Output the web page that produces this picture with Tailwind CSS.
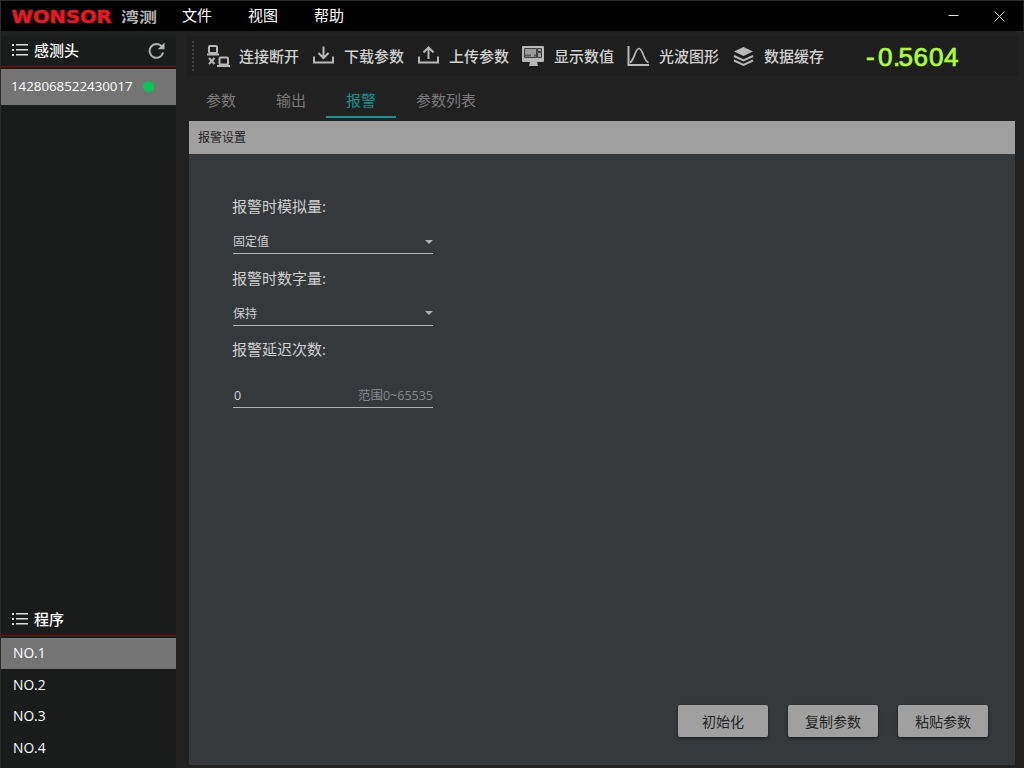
<!DOCTYPE html>
<html lang="zh-CN">
<head>
    <meta charset="UTF-8">
    <title>WONSOR 湾测</title>
    <script src="https://cdn.jsdelivr.net/npm/@tailwindcss/browser@4"></script>
</head>
<body class="w-[1024px] h-[768px] overflow-hidden bg-[#212121] font-['Open_Sans','Noto_Sans_CJK_SC',sans-serif] text-white">
    <div class="flex h-full flex-col border-t border-l border-[#2b2b2b]">

        <!-- Title bar -->
        <header class="flex h-[30px] w-[1022px] shrink-0 items-center bg-black">
            <svg class="ml-[10px] shrink-0" width="148" height="30" viewBox="0 0 148 30">
                <text x="0.5" y="21.5" font-family="DejaVu Sans" font-weight="bold" font-size="17" textLength="100" lengthAdjust="spacingAndGlyphs" fill="#e5191f" stroke="#e5191f" stroke-width="0.5">WONSOR</text>
                <text x="110" y="20.5" font-family="Noto Sans CJK SC" font-weight="bold" font-size="14" textLength="36" lengthAdjust="spacingAndGlyphs" fill="#b4b4b4">湾测</text>
            </svg>
            <nav class="ml-[23px] flex gap-9 text-[15px] leading-[28px]">
                <a class="pb-0.5">文件</a>
                <a class="pb-0.5">视图</a>
                <a class="pb-0.5">帮助</a>
            </nav>
            <div class="ml-auto mr-[18px] flex items-center gap-[35px]">
                <svg width="11" height="11" viewBox="0 0 11 11" stroke="#e0e0e0"><path d="M0.5 4.5h10"/></svg>
                <svg width="11" height="11" viewBox="0 0 11 11" stroke="#e0e0e0"><path d="M0.5 0.5l10 10M10.5 0.5l-10 10"/></svg>
            </div>
        </header>

        <div class="flex min-h-0 flex-1">
            <!-- Sidebar -->
            <aside class="mt-[5px] flex w-[175px] shrink-0 flex-col bg-[#1a1c1b]">
                <div class="flex h-[31px] shrink-0 items-center border-b border-[#900606] pb-0.5 pl-[11px] pr-[11px]">
                    <svg width="16" height="12" viewBox="0 0 16 12" fill="#dedede"><path d="M0 0h2v2H0zM4 0h12v1.6H4zM0 5h2v2H0zM4 5h12v1.6H4zM0 10h2v2H0zM4 10h12v1.6H4z"/></svg>
                    <span class="ml-[6px] text-[15px] leading-[28px] font-medium">感测头</span>
                    <svg class="ml-auto" width="17" height="17" viewBox="0 0 17 17" fill="none"><path d="M13.8 4.4A6.9 6.9 0 1 0 15.2 10.6" stroke="#b5b5b5" stroke-width="2"/><path d="M16.5 0.6v6.7H9.8z" fill="#b5b5b5"/></svg>
                </div>
                <div class="mt-[2px] flex h-9 shrink-0 items-center bg-[#747474] pb-0.5 pl-[10px]">
                    <span class="text-[13.3px] leading-[34px]">1428068522430017</span>
                    <span class="ml-[10px] size-[11px] rounded-full bg-[#00c853]"></span>
                </div>
                <div class="mt-auto flex h-[31px] shrink-0 items-center border-b border-[#900606] pb-0.5 pl-[11px]">
                    <svg width="16" height="12" viewBox="0 0 16 12" fill="#dedede"><path d="M0 0h2v2H0zM4 0h12v1.6H4zM0 5h2v2H0zM4 5h12v1.6H4zM0 10h2v2H0zM4 10h12v1.6H4z"/></svg>
                    <span class="ml-[6px] text-[15px] leading-[28px] font-medium">程序</span>
                </div>
                <ul class="mt-[2px] h-[130px] shrink-0 text-[13.8px]">
                    <li class="h-[31px] bg-[#747474] pl-3 leading-[29px]">NO.1</li>
                    <li class="h-8 pl-3 leading-8">NO.2</li>
                    <li class="h-[31px] pl-3 leading-[29px]">NO.3</li>
                    <li class="h-8 pl-3 leading-8">NO.4</li>
                </ul>
            </aside>

            <main class="ml-[10px] mt-[5px] flex w-[832px] flex-col">
                <!-- Toolbar -->
                <div class="flex h-10 shrink-0 items-center bg-[#1e1e1e] text-[15px] font-medium text-[#d2d2d2]">
                    <svg class="ml-[6px] mr-[12px]" width="2" height="30" viewBox="0 0 2 30"><path d="M1 0v30" stroke="#3e3e3e" stroke-width="2" stroke-dasharray="2 2"/></svg>
                    <div class="flex gap-3">
                        <div class="flex h-10 items-center gap-[9px]">
                            <svg width="24" height="24" viewBox="0 0 24 24" fill="none" stroke="#b8b8b8" stroke-width="2">
                                <rect x="3" y="2" width="8" height="7" rx="1"/>
                                <path d="M1 10.5h12M3 14l5.500 6M8.500 14L3 20M11 22h13"/>
                                <rect x="13.500" y="13.500" width="8.500" height="7" rx="1"/>
                            </svg>
                            <span>连接断开</span>
                        </div>
                        <div class="flex h-10 items-center gap-[9px]">
                            <svg width="24" height="24" viewBox="0 0 24 24" fill="none" stroke="#b8b8b8" stroke-width="2">
                                <path d="M3 12.500V18.500h19v-6M12.500 2.500v11.500M7.500 9l5 5 5-5"/>
                            </svg>
                            <span>下载参数</span>
                        </div>
                        <div class="flex h-10 items-center gap-[9px]">
                            <svg width="24" height="24" viewBox="0 0 24 24" fill="none" stroke="#b8b8b8" stroke-width="2">
                                <path d="M3 12.500v6h19v-6M12.500 15V4M7.500 8.500l5-5 5 5"/>
                            </svg>
                            <span>上传参数</span>
                        </div>
                        <div class="flex h-10 items-center gap-[9px]">
                            <svg width="24" height="24" viewBox="0 0 24 24">
                                <path d="M2 2h20a1 1 0 0 1 1 1v14a1 1 0 0 1-1 1h-6l1 4H8l1-4H2a1 1 0 0 1-1-1V3a1 1 0 0 1 1-1z" fill="#b8b8b8"/>
                                <path d="M3.500 4.500h12v9h-12zM16.500 4.500h4v3h-4zM16.500 8.500h4v5h-4z" fill="#9a9a9a" stroke="#3c3c3c"/>
                                <path d="M4 10.500h6v2H4zM13 10.500h2v2h-2z" fill="#5a5a5a"/>
                            </svg>
                            <span>显示数值</span>
                        </div>
                        <div class="flex h-10 items-center gap-[9px]">
                            <svg width="24" height="24" viewBox="0 0 24 24" fill="none" stroke="#b8b8b8" stroke-width="2">
                                <path d="M2.500 2v19H23"/>
                                <path d="M4 18.500C8.500 16.500 9 4.500 13 4.500S17.500 17 22.500 18.500" stroke-width="1.700"/>
                            </svg>
                            <span>光波图形</span>
                        </div>
                        <div class="flex h-10 items-center gap-[9px]">
                            <svg width="24" height="24" viewBox="0 0 24 24">
                                <path d="M12.500 3L22 7.500l-9.500 4.500L3 7.500z" fill="#b8b8b8"/>
                                <path d="M3 12l9.500 4.500L22 12M3 16.500l9.500 4.500 9.500-4.500" fill="none" stroke="#b8b8b8" stroke-width="2"/>
                            </svg>
                            <span>数据缓存</span>
                        </div>
                    </div>
                    <!-- Live reading -->
                    <svg class="ml-[39px]" width="104" height="38" viewBox="0 0 104 38" fill="#adff2f" font-family="Liberation Sans" font-size="26" stroke="#adff2f" stroke-width="0.7">
                        <text x="3 15 30 35.500 50.500 66 81" y="28.500">-0.5604</text>
                    </svg>
                </div>

                <!-- Tabs -->
                <nav class="flex h-[42px] shrink-0 text-[15px] leading-[48px] text-[#7a7a7a]">
                    <a class="w-[70px] text-center">参数</a>
                    <a class="w-[70px] text-center">输出</a>
                    <a class="w-[70px] border-b-2 border-[#0a9590] text-center text-[#0a9590]">报警</a>
                    <a class="w-[100px] text-center">参数列表</a>
                </nav>

                <!-- Alarm settings -->
                <section class="ml-[3px] mt-[3px] flex h-[644px] w-[826px] shrink-0 flex-col bg-[#36393c]">
                    <h2 class="h-[33px] bg-[#a0a0a0] pl-[9px] text-[12px] leading-[33px] text-[#212121]">报警设置</h2>
                    <form class="ml-[43px] mt-[40px] w-[201px] text-[#d0d0d0]">
                        <label class="block h-6 text-[15px] leading-6">报警时模拟量:</label>
                        <div class="mb-3 ml-px mt-[10px] flex h-[26px] items-end justify-between border-b border-[#b0b0b0] text-[12px] leading-[23px]">
                            <span>固定值</span>
                            <svg class="mb-[9px]" width="8" height="4" viewBox="0 0 8 4"><path d="M0 0h8L4 4z" fill="#b0b0b0"/></svg>
                        </div>
                        <label class="block h-6 text-[15px] leading-6">报警时数字量:</label>
                        <div class="mb-[11px] ml-px mt-[10px] flex h-[26px] items-end justify-between border-b border-[#b0b0b0] text-[12px] leading-[23px]">
                            <span>保持</span>
                            <svg class="mb-[10px]" width="8" height="4" viewBox="0 0 8 4"><path d="M0 0h8L4 4z" fill="#b0b0b0"/></svg>
                        </div>
                        <label class="block h-6 text-[15px] leading-6">报警延迟次数:</label>
                        <div class="ml-px mt-[21px] flex h-[26px] items-end justify-between border-b border-[#b0b0b0] text-[12px] leading-[23px]">
                            <span class="pl-px text-[12.5px]">0</span>
                            <span class="text-[12.5px] text-[#85878a]">范围0~65535</span>
                        </div>
                    </form>
                    <div class="mb-[28px] mr-[27px] mt-auto flex justify-end gap-5 text-[14px] text-[#242424]">
                        <button class="h-8 w-[90px] rounded-[2px] bg-[#a0a0a0] shadow-[0_1px_3px_rgba(0,0,0,0.6)]">初始化</button>
                        <button class="h-8 w-[90px] rounded-[2px] bg-[#a0a0a0] shadow-[0_1px_3px_rgba(0,0,0,0.6)]">复制参数</button>
                        <button class="h-8 w-[90px] rounded-[2px] bg-[#a0a0a0] shadow-[0_1px_3px_rgba(0,0,0,0.6)]">粘贴参数</button>
                    </div>
                </section>
            </main>
        </div>
    </div>
</body>
</html>
